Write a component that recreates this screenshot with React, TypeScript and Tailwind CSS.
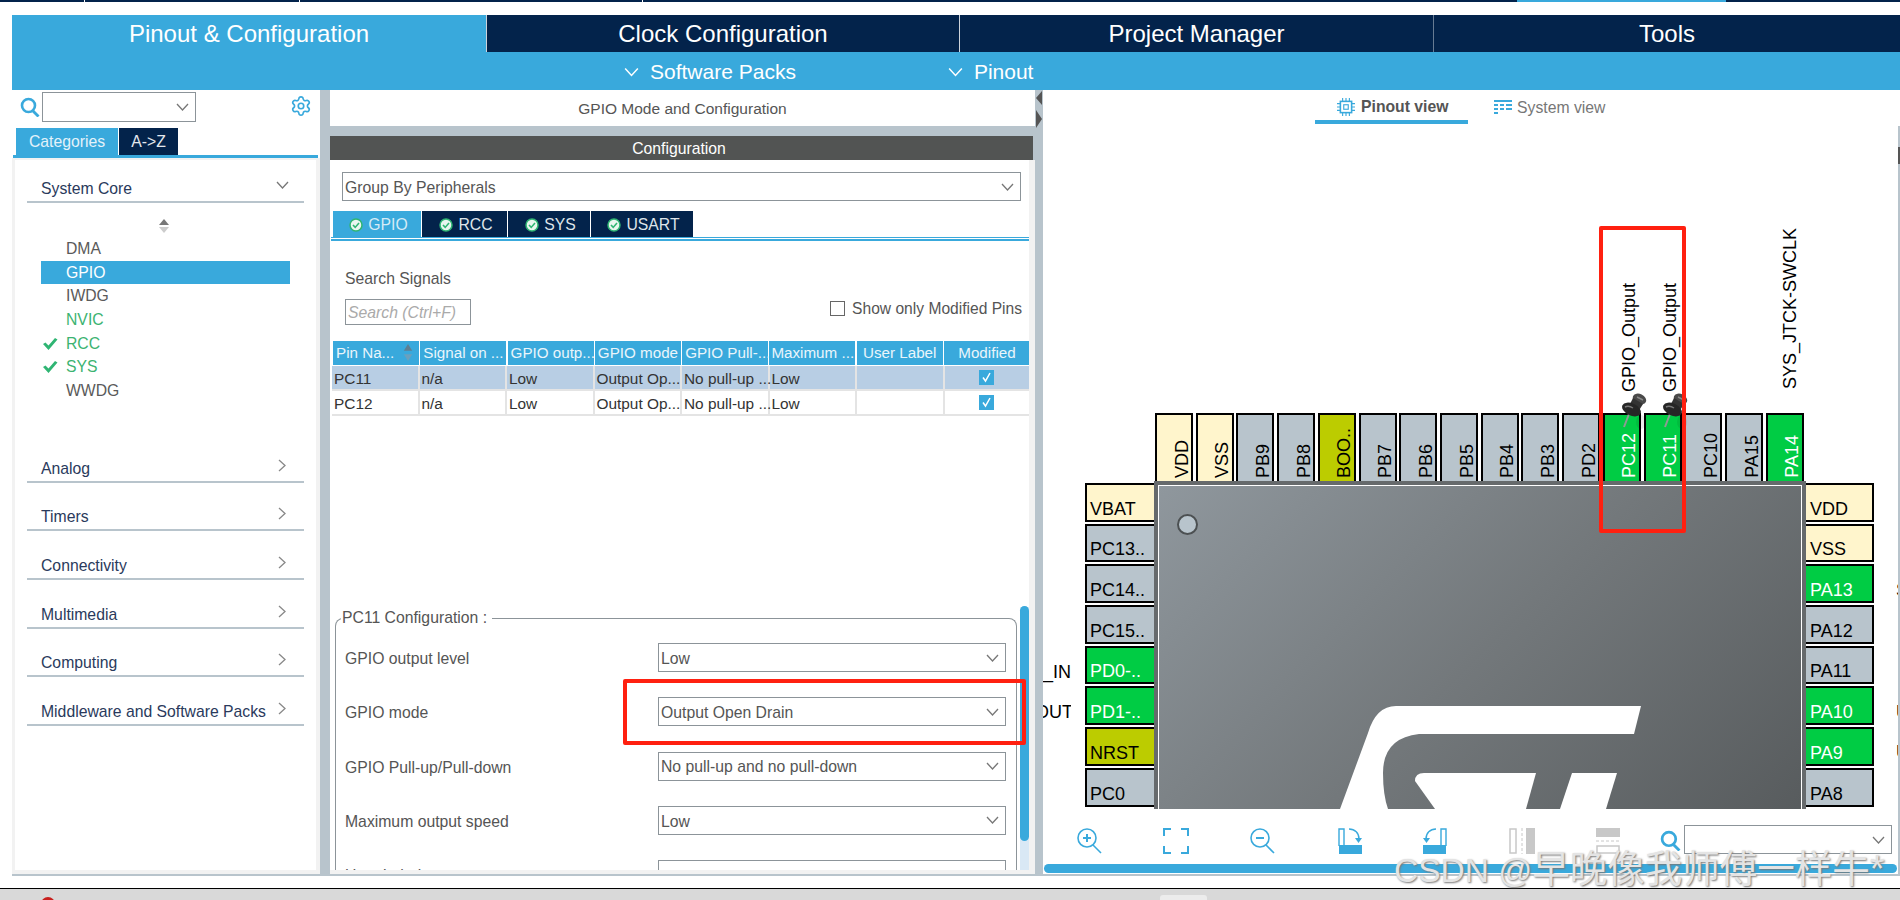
import { Settings } from "lucide-react";

const BLUE = "#39a9dc";

const TOP_PINS = [
  ["VDD", "p"], ["VSS", "p"], ["PB9", "g"], ["PB8", "g"], ["BOO..", "o"], ["PB7", "g"], ["PB6", "g"], ["PB5", "g"],
  ["PB4", "g"], ["PB3", "g"], ["PD2", "g"], ["PC12", "a"], ["PC11", "a"], ["PC10", "g"], ["PA15", "g"], ["PA14", "a"],
];
const LEFT_PINS = [
  ["VBAT", "p"], ["PC13..", "g"], ["PC14..", "g"], ["PC15..", "g"], ["PD0-..", "a"], ["PD1-..", "a"], ["NRST", "o"], ["PC0", "g"], ["", "g"],
];
const RIGHT_PINS = [
  ["VDD", "p"], ["VSS", "p"], ["PA13", "a"], ["PA12", "g"], ["PA11", "g"], ["PA10", "a"], ["PA9", "a"], ["PA8", "g"], ["", "g"],
];

function pinColor(k: string) {
  if (k === "p") return "bg-[#fff5cc] text-black";
  if (k === "o") return "bg-[#bccc00] text-black";
  if (k === "a") return "bg-[#00cc44] text-white";
  return "bg-[#b8c4cc] text-black";
}

const COLS = ["Pin Na...", "Signal on ...", "GPIO outp...", "GPIO mode", "GPIO Pull-...", "Maximum ...", "User Label", "Modified"];
const ROWS = [
  ["PC11", "n/a", "Low", "Output Op...", "No pull-up ...", "Low", ""],
  ["PC12", "n/a", "Low", "Output Op...", "No pull-up ...", "Low", ""],
];

function ChevDown({ className = "w-[13px] h-[8px]", color = "#777" }: { className?: string; color?: string }) {
  return (
    <svg viewBox="0 0 13 8" className={className} fill="none" stroke={color} strokeWidth="1.3">
      <path d="M1 1l5.5 6L12 1" />
    </svg>
  );
}

function ChevRight() {
  return (
    <svg viewBox="0 0 8 13" className="w-[8px] h-[13px]" fill="none" stroke="#888" strokeWidth="1.3">
      <path d="M1 1l6 5.5L1 12" />
    </svg>
  );
}

function Magnifier({ className = "w-[20px] h-[18px]" }: { className?: string }) {
  return (
    <svg viewBox="0 0 20 20" className={className} fill="none" stroke={BLUE}>
      <circle cx="8.5" cy="8.5" r="6.5" strokeWidth="2.6" />
      <path d="M13 14l5.500 5.500" strokeWidth="2.8" />
    </svg>
  );
}

function TabCheck() {
  return (
    <svg viewBox="0 0 14 14" className="w-[14px] h-[14px] shrink-0">
      <circle cx="7" cy="7" r="6" fill="#e9f6ef" stroke="#2fb573" strokeWidth="1.5" />
      <path d="M4 7l2.2 2.4L10 5" fill="none" stroke="#2fb573" strokeWidth="1.6" />
    </svg>
  );
}

function GreenCheck() {
  return (
    <svg viewBox="0 0 16 14" className="w-[16px] h-[14px]">
      <path d="M1 7l2.5-1.5 3 3L13 1l2.5 1.5L6.5 13z" fill="#2fb573" />
    </svg>
  );
}

function ModifiedBox() {
  return (
    <svg viewBox="0 0 15 15" className="w-[15px] h-[15px]">
      <rect width="15" height="15" fill={BLUE} />
      <path d="M4 7.5l2.5 3.5L11 3" fill="none" stroke="white" strokeWidth="1.5" />
    </svg>
  );
}

function Select({ text = "", className }: { text?: string; className: string }) {
  return (
    <div className={`flex items-center justify-between border border-[#8c9499] bg-white pl-[2px] pr-[6px] text-[15.75px] text-[#555] ${className}`}>
      <span className="pt-[2px]">{text}</span>
      <ChevDown />
    </div>
  );
}

function ConfigRow({ label, value }: { label: string; value: string }) {
  return (
    <div className="flex h-[54.3px] shrink-0 items-start justify-between pr-[10px] pl-[9px]">
      <span className="mt-[4px] text-[15.75px] text-[#555]">{label}</span>
      <Select text={value} className="h-[29px] w-[348px]" />
    </div>
  );
}

function Pushpin() {
  return (
    <svg viewBox="0 0 28 37" className="w-[28px] h-[37px]">
      <ellipse cx="21" cy="30" rx="5" ry="7" fill="#000" opacity="0.08" />
      <path d="M9 22L4 35" stroke="#8f9a94" strokeWidth="2" />
      <ellipse cx="19.500" cy="7" rx="7" ry="5" transform="rotate(25 19.500 7)" fill="#4a4a4a" />
      <path d="M13 6L23 12L18 20L9 14Z" fill="#333" />
      <ellipse cx="11.500" cy="17.500" rx="10" ry="6" transform="rotate(25 11.500 17.500)" fill="#262626" />
      <path d="M5 15c2-1 5-1 8 1" fill="none" stroke="#777" strokeWidth="1.500" />
      <path d="M17 5l6 3" stroke="#8a8a8a" strokeWidth="1.500" />
    </svg>
  );
}

export default function App() {
  return (
    <div className="relative h-[900px] w-[1900px] overflow-hidden bg-white font-['Liberation_Sans',Arial,sans-serif]">
      {/* strip of the window above */}
      <div className="relative h-[2px] bg-[#03234b]">
        <div className="absolute left-[84px] top-0 h-[2px] w-px bg-white" />
        <div className="absolute left-[299px] top-0 h-[2px] w-px bg-white" />
        <div className="absolute left-[642px] top-0 h-[2px] w-px bg-white" />
        <div className="absolute left-[1517px] top-0 h-[2px] w-[209px] bg-[#39a9dc]" />
      </div>

      {/* main tabs */}
      <div className="mt-[13px] ml-[12px] flex h-[37px] text-[24px] text-white">
        <div className="flex w-[474px] items-center justify-center bg-[#39a9dc] pt-px">Pinout &amp; Configuration</div>
        <div className="flex w-[473px] items-center justify-center border-l border-white/80 bg-[#03234b] pt-px">Clock Configuration</div>
        <div className="flex w-[474px] items-center justify-center border-l border-white/80 bg-[#03234b] pt-px">Project Manager</div>
        <div className="flex flex-1 items-center justify-center border-l border-white/40 bg-[#03234b] pt-px">Tools</div>
      </div>
      <div className="ml-[12px] flex h-[38px] items-center bg-[#39a9dc] pt-px pl-[612px] text-[21px] text-white">
        <ChevDown className="mr-[11px] h-[10px] w-[15px]" color="white" />
        <span>Software Packs</span>
        <ChevDown className="mr-[11px] ml-[152px] h-[10px] w-[15px]" color="white" />
        <span>Pinout</span>
      </div>

      {/* work area */}
      <div className="ml-[12px] flex h-[786px] bg-[#b8c4cc] pb-[2px]">
        {/* left panel */}
        <div className="flex w-[308px] flex-col bg-white">
          <div className="flex h-[38px] pt-[2px] pl-[8px]">
            <Magnifier className="mt-[5px] mr-[2px] h-[20px] w-[20px]" />
            <Select className="h-[30px] w-[154px]" />
            <Settings size={22} color={BLUE} strokeWidth={1.8} className="mt-[3px] ml-[94px]" />
          </div>
          <div className="flex h-[27px] gap-px pl-[4px] text-[15.75px]">
            <div className="flex w-[102px] items-center justify-center bg-[#39a9dc] pt-px text-[#e3f2fa]">Categories</div>
            <div className="flex w-[59px] items-center justify-center bg-[#03234b] pt-px text-[#e3e8ee]">A-&gt;Z</div>
          </div>
          <div className="mr-[2px] ml-px h-[3px] bg-[#39a9dc]" />
          <div className="flex min-h-0 flex-1 flex-col bg-[#f2f2f2] pt-[2px] pr-[4px] pb-[4px] pl-[3px]">
            <div className="flex flex-1 flex-col bg-white text-[15.75px]">
              <div className="mx-[12px] flex h-[43px] items-end justify-between border-b-2 border-[#b8c4cc] pr-[15px] pb-[3px] pl-[14px] text-[#2a3a5c]">
                <span className="leading-[18px]">System Core</span>
                <ChevDown className="mb-[9px] h-[8px] w-[13px]" />
              </div>
              <div className="flex h-[34px] items-center justify-center pt-[11px] pr-[4px]">
                <svg viewBox="0 0 10 14" className="h-[14px] w-[10px]">
                  <path d="M5 0l5 6H0z" fill="#777" />
                  <path d="M5 14l5-6H0z" fill="#ccc" />
                </svg>
              </div>
              {["DMA", "GPIO", "IWDG", "NVIC", "RCC", "SYS", "WWDG"].map((n) => {
                const on = n === "GPIO";
                const ok = n === "RCC" || n === "SYS";
                const green = ok || n === "NVIC";
                return (
                  <div
                    key={n}
                    className={`ml-[26px] flex h-[23.7px] w-[249px] items-center ${on ? "bg-[#39a9dc] text-white" : green ? "text-[#3cb371]" : "text-[#5a5a5a]"}`}
                  >
                    <span className="flex w-[25px] shrink-0 justify-center pr-[7px]">{ok && <GreenCheck />}</span>
                    {n}
                  </div>
                );
              })}
              <div className="mt-[31px] flex flex-col">
                {["Analog", "Timers", "Connectivity", "Multimedia", "Computing", "Middleware and Software Packs"].map((s) => (
                  <div key={s} className="mx-[12px] flex h-[48.7px] items-end justify-between border-b-2 border-[#b8c4cc] pr-[18px] pb-[3px] pl-[14px] text-[#2a3a5c]">
                    <span className="leading-[18px]">{s}</span>
                    <span className="mb-[6px]"><ChevRight /></span>
                  </div>
                ))}
              </div>
            </div>
          </div>
        </div>

        <div className="w-[10px] shrink-0" />

        {/* center panel */}
        <div className="flex w-[705px] shrink-0 flex-col">
          <div className="flex h-[36px] items-center justify-center bg-white pt-px text-[15.5px] text-[#555]">GPIO Mode and Configuration</div>
          <div className="h-[10px]" />
          <div className="mr-[2px] flex h-[24px] items-center justify-center bg-[#525453] pt-px pr-[5px] text-[15.75px] text-white">Configuration</div>
          <div className="flex min-h-0 flex-1 flex-col bg-[#f2f2f2] pr-[6px] pb-[4px]">
            <div className="flex min-h-0 flex-1 flex-col overflow-hidden bg-white">
              <Select text="Group By Peripherals" className="mx-[12px] mt-[12px] h-[29px] w-[679px] shrink-0" />
              <div className="mt-[10px] ml-[3px] flex h-[26px] shrink-0 gap-px text-[15.75px]">
                {[["GPIO", "w-[88px]", "bg-[#39a9dc] text-[#d5ebf6]"], ["RCC", "w-[85px]", "bg-[#03234b] text-[#dfe5ea]"], ["SYS", "w-[82px]", "bg-[#03234b] text-[#dfe5ea]"], ["USART", "w-[102px]", "bg-[#03234b] text-[#dfe5ea]"]].map(([t, w, c]) => (
                  <div key={t} className={`flex items-center justify-center gap-[5px] pt-px pl-[3px] ${w} ${c}`}>
                    <TabCheck />
                    {t}
                  </div>
                ))}
              </div>
              <div className="ml-px h-px shrink-0 bg-[#39a9dc]" />
              <div className="ml-px mt-px h-[2px] shrink-0 bg-[#39a9dc]" />

              <div className="flex h-[100px] shrink-0 justify-between pr-[7px] pl-[15px]">
                <div className="flex flex-col pt-[29px]">
                  <span className="leading-[18px] text-[15.75px] text-[#555]">Search Signals</span>
                  <div className="mt-[11px] flex h-[26px] w-[126px] items-center border border-[#8c9499] pt-px pl-[2px] text-[15.75px] italic text-[#aaa]">Search (Ctrl+F)</div>
                </div>
                <div className="flex items-start gap-[7px] pt-[60px] text-[15.6px] text-[#555]">
                  <span className="h-[15px] w-[15px] border border-[#666]" />
                  <span className="leading-[15px]">Show only Modified Pins</span>
                </div>
              </div>

              <div className="ml-[3px] flex w-[697px] shrink-0 justify-between">
                {COLS.map((c, i) => (
                  <div key={c} className={`relative flex h-[24px] w-[86px] items-center whitespace-nowrap bg-[#39a9dc] pt-px text-[15.2px] text-[#eaf5fb] ${i > 5 ? "justify-center" : i === 5 ? "pl-[2px]" : "pl-[3px]"}`}>
                    {c}
                    {i === 0 && (
                      <svg viewBox="0 0 10 20" className="absolute right-[6px] top-[3px] h-[17px] w-[10px]">
                        <path d="M5 0l5 8H0z" fill="#5e7f93" />
                        <path d="M5 20l5-8H0z" fill="#6aa0bd" />
                      </svg>
                    )}
                  </div>
                ))}
              </div>
              <div className="mt-px ml-[2px] flex w-[697px] shrink-0 flex-col">
                {ROWS.map((r, ri) => (
                  <div key={r[0]} className={`flex h-[25px] border-b-2 border-[#e4e4e4] text-[15.4px] text-[#333] ${ri === 0 ? "bg-[#b8cee4]" : "bg-white"}`}>
                    {r.map((v, i) => (
                      <div key={i} className="flex h-full w-[87.5px] items-center whitespace-nowrap border-r-2 border-[#e4e4e4] pt-[2px] pl-[2px]">
                        {v}
                      </div>
                    ))}
                    <div className="flex flex-1 items-center justify-center"><ModifiedBox /></div>
                  </div>
                ))}
              </div>

              <div className="mt-[202px] flex min-h-0 flex-1">
                <div className="relative ml-[5px] w-[682px] shrink-0 rounded-t-[8px] border border-b-0 border-[#8c9499] pt-[24px]">
                  <span className="absolute left-[5px] top-[-11px] bg-white pr-[5px] pl-px text-[15.75px] leading-[20px] text-[#555]">PC11 Configuration :</span>
                  <ConfigRow label="GPIO output level" value="Low" />
                  <ConfigRow label="GPIO mode" value="Output Open Drain" />
                  <ConfigRow label="GPIO Pull-up/Pull-down" value="No pull-up and no pull-down" />
                  <ConfigRow label="Maximum output speed" value="Low" />
                  <div className="flex h-[54px] items-start justify-between pr-[10px] pl-[9px]">
                    <span className="mt-[4px] text-[15.75px] text-[#555]">User Label</span>
                    <div className="h-[29px] w-[348px] border border-[#8c9499]" />
                  </div>
                </div>
                <div className="mt-[-12px] ml-[3px] flex w-[9px] flex-col rounded-t-[5px] bg-[#d9e8f5]">
                  <div className="h-[235px] rounded-[5px] bg-[#39a9dc]" />
                </div>
              </div>
            </div>
          </div>
        </div>

        <div className="w-[8px] shrink-0" />

        {/* pinout */}
        <div className="flex min-w-0 flex-1 flex-col bg-white">
          <div className="flex h-[34px] shrink-0 pl-[272px] text-[15.75px]">
            <div className="flex h-full w-[153px] items-center gap-[6px] border-b-[4px] border-[#39a9dc] pt-[4px] pl-[22px] font-bold text-[#555]">
              <svg viewBox="0 0 16 16" className="h-[18px] w-[18px]" fill="none" stroke={BLUE}>
                <rect x="3" y="3" width="10" height="10" strokeWidth="1.4" />
                <rect x="6" y="6" width="4" height="4" strokeWidth="1" />
                <path d="M5 0v3M8 0v3M11 0v3M5 13v3M8 13v3M11 13v3M0 5h3M0 8h3M0 11h3M13 5h3M13 8h3M13 11h3" strokeWidth="1" />
              </svg>
              Pinout view
            </div>
            <div className="ml-[26px] flex h-full items-center gap-[5px] pt-px text-[#777]">
              <svg viewBox="0 0 18 16" className="h-[16px] w-[18px]" fill={BLUE}>
                <path d="M0 0h18v2H0zM0 4h4v2H0zM6 4h4v2H6zM12 4h6v2h-6zM0 8h4v2H0zM6 8h4v2H6zM0 12h4v2H0zM12 8h6v2h-6z" />
              </svg>
              System view
            </div>
          </div>

          {/* chip canvas */}
          <div className="relative h-[685px] shrink-0 overflow-hidden">
            <span className="absolute left-[576px] top-[159px] text-[18px] leading-[20px] whitespace-nowrap text-black [writing-mode:vertical-rl] rotate-180">GPIO_Output</span>
            <span className="absolute left-[617px] top-[159px] text-[18px] leading-[20px] whitespace-nowrap text-black [writing-mode:vertical-rl] rotate-180">GPIO_Output</span>
            <span className="absolute left-[737px] top-[104px] text-[18px] leading-[20px] whitespace-nowrap text-black [writing-mode:vertical-rl] rotate-180">SYS_JTCK-SWCLK</span>

            <div className="absolute left-[112px] top-[289px] flex gap-[2.73px]">
              {TOP_PINS.map(([n, k]) => (
                <div key={n} className={`flex h-[68px] w-[38px] items-end justify-center border-2 border-b-0 border-black pb-[3px] pl-[15px] text-[18px] ${pinColor(k)}`}>
                  <span className="leading-[20px] whitespace-nowrap [writing-mode:vertical-rl] rotate-180">{n}</span>
                </div>
              ))}
            </div>

            <div className="absolute left-[42px] top-[359px] flex flex-col gap-[2px]">
              {LEFT_PINS.map(([n, k], i) => (
                <div key={i} className={`flex h-[38.7px] w-[69px] items-end overflow-hidden border-2 border-r-0 border-black pl-[3px] text-[18px] ${pinColor(k)}`}>
                  <span className="leading-[22px] whitespace-nowrap">{n}</span>
                </div>
              ))}
            </div>
            <div className="absolute left-[763px] top-[359px] flex flex-col gap-[2px]">
              {RIGHT_PINS.map(([n, k], i) => (
                <div key={i} className={`flex h-[38.7px] w-[68px] items-end overflow-hidden border-2 border-l-0 border-black pl-[4px] text-[18px] ${pinColor(k)}`}>
                  <span className="leading-[22px] whitespace-nowrap">{n}</span>
                </div>
              ))}
            </div>

            {/* pin labels beside the left and right pins */}
            <span className="absolute left-[-8px] top-[537px] w-[36px] text-right text-[18px] leading-[22px] text-black">_IN</span>
            <span className="absolute left-[-8px] top-[577px] w-[36px] overflow-hidden text-right text-[18px] leading-[22px] text-black">OUT</span>
            <span className="absolute left-[853px] top-[455px] text-[18px] leading-[22px] text-black">S</span>
            <span className="absolute left-[853px] top-[577px] text-[18px] leading-[22px] text-black">U</span>
            <span className="absolute left-[853px] top-[617px] text-[18px] leading-[22px] text-black">U</span>

            <div className="absolute left-[111px] top-[357px] h-[340px] w-[652px] border-x-[4px] border-t-[4px] border-[#666a6c]">
              <div className="relative h-full w-full border-x border-t border-white bg-[linear-gradient(135deg,#8f979d_0%,#73787b_50%,#575b5d_100%)]">
                <div className="absolute left-[18px] top-[28px] h-[21px] w-[21px] rounded-full border-2 border-[#4c5052] bg-[#b8c4cc]" />
              </div>
            </div>

            <svg viewBox="1043 124 855 685" className="absolute left-0 top-0 h-[685px] w-[855px]" fill="white">
              <path d="M1340 809L1368 733Q1376 706 1396 706L1641 706L1634 734L1419 734Q1383 738 1383 773Q1383 795 1388 809Z" />
              <path d="M1415 781Q1415 773 1424 773L1536 773L1526 809L1435 809Z" />
              <path d="M1572 773L1617 773L1606 809L1560 809Z" />
            </svg>

            <div className="absolute left-[577px] top-[268px]"><Pushpin /></div>
            <div className="absolute left-[618px] top-[268px]"><Pushpin /></div>
          </div>

          {/* toolbar */}
          <div className="flex h-[55px] shrink-0 items-start pl-[34px]">
            <svg viewBox="0 0 26 26" className="mt-[19px] h-[26px] w-[26px]" fill="none" stroke={BLUE}>
              <circle cx="10" cy="10" r="9" strokeWidth="1.6" />
              <path d="M16 17l8 8" strokeWidth="1.6" />
              <path d="M6 10h8M10 6v8" strokeWidth="2" />
            </svg>
            <svg viewBox="0 0 26 26" className="mt-[19px] ml-[60px] h-[26px] w-[26px]" fill="none" stroke={BLUE} strokeWidth="2">
              <path d="M8 1H1v7M18 1h7v7M8 25H1v-7M18 25h7v-7" />
            </svg>
            <svg viewBox="0 0 26 26" className="mt-[19px] ml-[61px] h-[26px] w-[26px]" fill="none" stroke={BLUE}>
              <circle cx="10" cy="10" r="9" strokeWidth="1.6" />
              <path d="M16 17l8 8" strokeWidth="1.6" />
              <path d="M6 10h8" strokeWidth="2" />
            </svg>
            <svg viewBox="0 0 26 26" className="mt-[19px] ml-[60px] h-[26px] w-[26px]" fill="none" stroke={BLUE}>
              <path d="M3 18V1h5v17" strokeWidth="1.4" />
              <path d="M13 1c6 0 10 4 10 10" strokeWidth="1.4" />
              <path d="M19 10h7l-3.500 5z" fill={BLUE} stroke="none" />
              <rect x="3" y="17" width="23" height="9" fill={BLUE} stroke="none" />
            </svg>
            <svg viewBox="0 0 27 26" className="mt-[19px] ml-[60px] h-[26px] w-[27px]" fill="none" stroke={BLUE}>
              <path d="M24 18V1h-5v17" strokeWidth="1.4" />
              <path d="M14 1C8 1 4 5 4 11" strokeWidth="1.4" />
              <path d="M8 10H1l3.500 5z" fill={BLUE} stroke="none" />
              <rect x="1" y="17" width="23" height="9" fill={BLUE} stroke="none" />
            </svg>
            <svg viewBox="0 0 26 26" className="mt-[19px] ml-[60px] h-[26px] w-[26px]" fill="none" stroke="#c8c8c8">
              <rect x="1" y="1" width="6" height="24" strokeWidth="1.5" />
              <path d="M13 0v26" strokeWidth="1" strokeDasharray="3 2" />
              <rect x="17" y="0" width="9" height="26" fill="#c8c8c8" stroke="none" />
            </svg>
            <svg viewBox="0 0 24 26" className="mt-[19px] ml-[61px] h-[26px] w-[24px]" fill="none" stroke="#c8c8c8">
              <rect x="0" y="0" width="24" height="9" fill="#c8c8c8" stroke="none" />
              <path d="M0 13h24" strokeWidth="1" strokeDasharray="3 2" />
              <rect x="1" y="18" width="22" height="7" strokeWidth="1.5" />
            </svg>
            <Magnifier className="mt-[21px] ml-[40px] h-[21px] w-[21px]" />
            <Select className="mt-[16px] ml-[3px] h-[29px] w-[208px]" />
          </div>

          {/* horizontal scrollbar */}
          <div className="mr-[3px] ml-px h-[9px] shrink-0 rounded-[5px] bg-[#39a9dc]" />
          <div className="h-[1px]" />
        </div>
      </div>

      <div className="h-[12px] bg-white" />
      <div className="h-px bg-black" />
      <div className="relative h-[11px] bg-[#d9d9d9]">
        <div className="absolute left-[41px] top-[8px] h-[14px] w-[14px] rounded-full bg-[#c8201e]" />
        <div className="absolute left-[1160px] top-[6px] h-[6px] w-[47px] rounded-t-[3px] bg-[#ececec]" />
      </div>

      {/* vertical scrollbar at the right edge of the pinout */}
      <div className="absolute right-0 top-[126px] h-[750px] w-[2px] bg-[#b8c4cc]">
        <div className="mt-[21px] h-[17px] w-[2px] bg-[#555]" />
      </div>

      {/* sash handle between the center and pinout panels */}
      <svg viewBox="0 0 8 40" className="absolute left-[1035px] top-[90px] h-[40px] w-[8px]" fill="#555">
        <path d="M7 1L1 8L7 15ZM1 20L7 29L1 38Z" />
      </svg>

      {/* red annotation boxes */}
      <div className="absolute left-[623px] top-[679px] h-[66px] w-[403px] rounded-[2px] border-[4px] border-[#ff2010]" />
      <div className="absolute left-[1599px] top-[226px] h-[307px] w-[87px] rounded-[2px] border-[4px] border-[#ff2010]" />

      {/* watermark */}
      <div className="pointer-events-none absolute left-[1394px] top-[841px] flex items-baseline whitespace-nowrap text-[#e4e4e4] font-['Liberation_Sans','Noto_Sans_CJK_SC',sans-serif] [text-shadow:1px_1px_2px_#777]">
        <span className="text-[33.5px]">CSDN @</span>
        <span className="text-[37.5px]">早晚像我师傅一样牛</span>
        <span className="text-[38px]">*</span>
      </div>
    </div>
  );
}
